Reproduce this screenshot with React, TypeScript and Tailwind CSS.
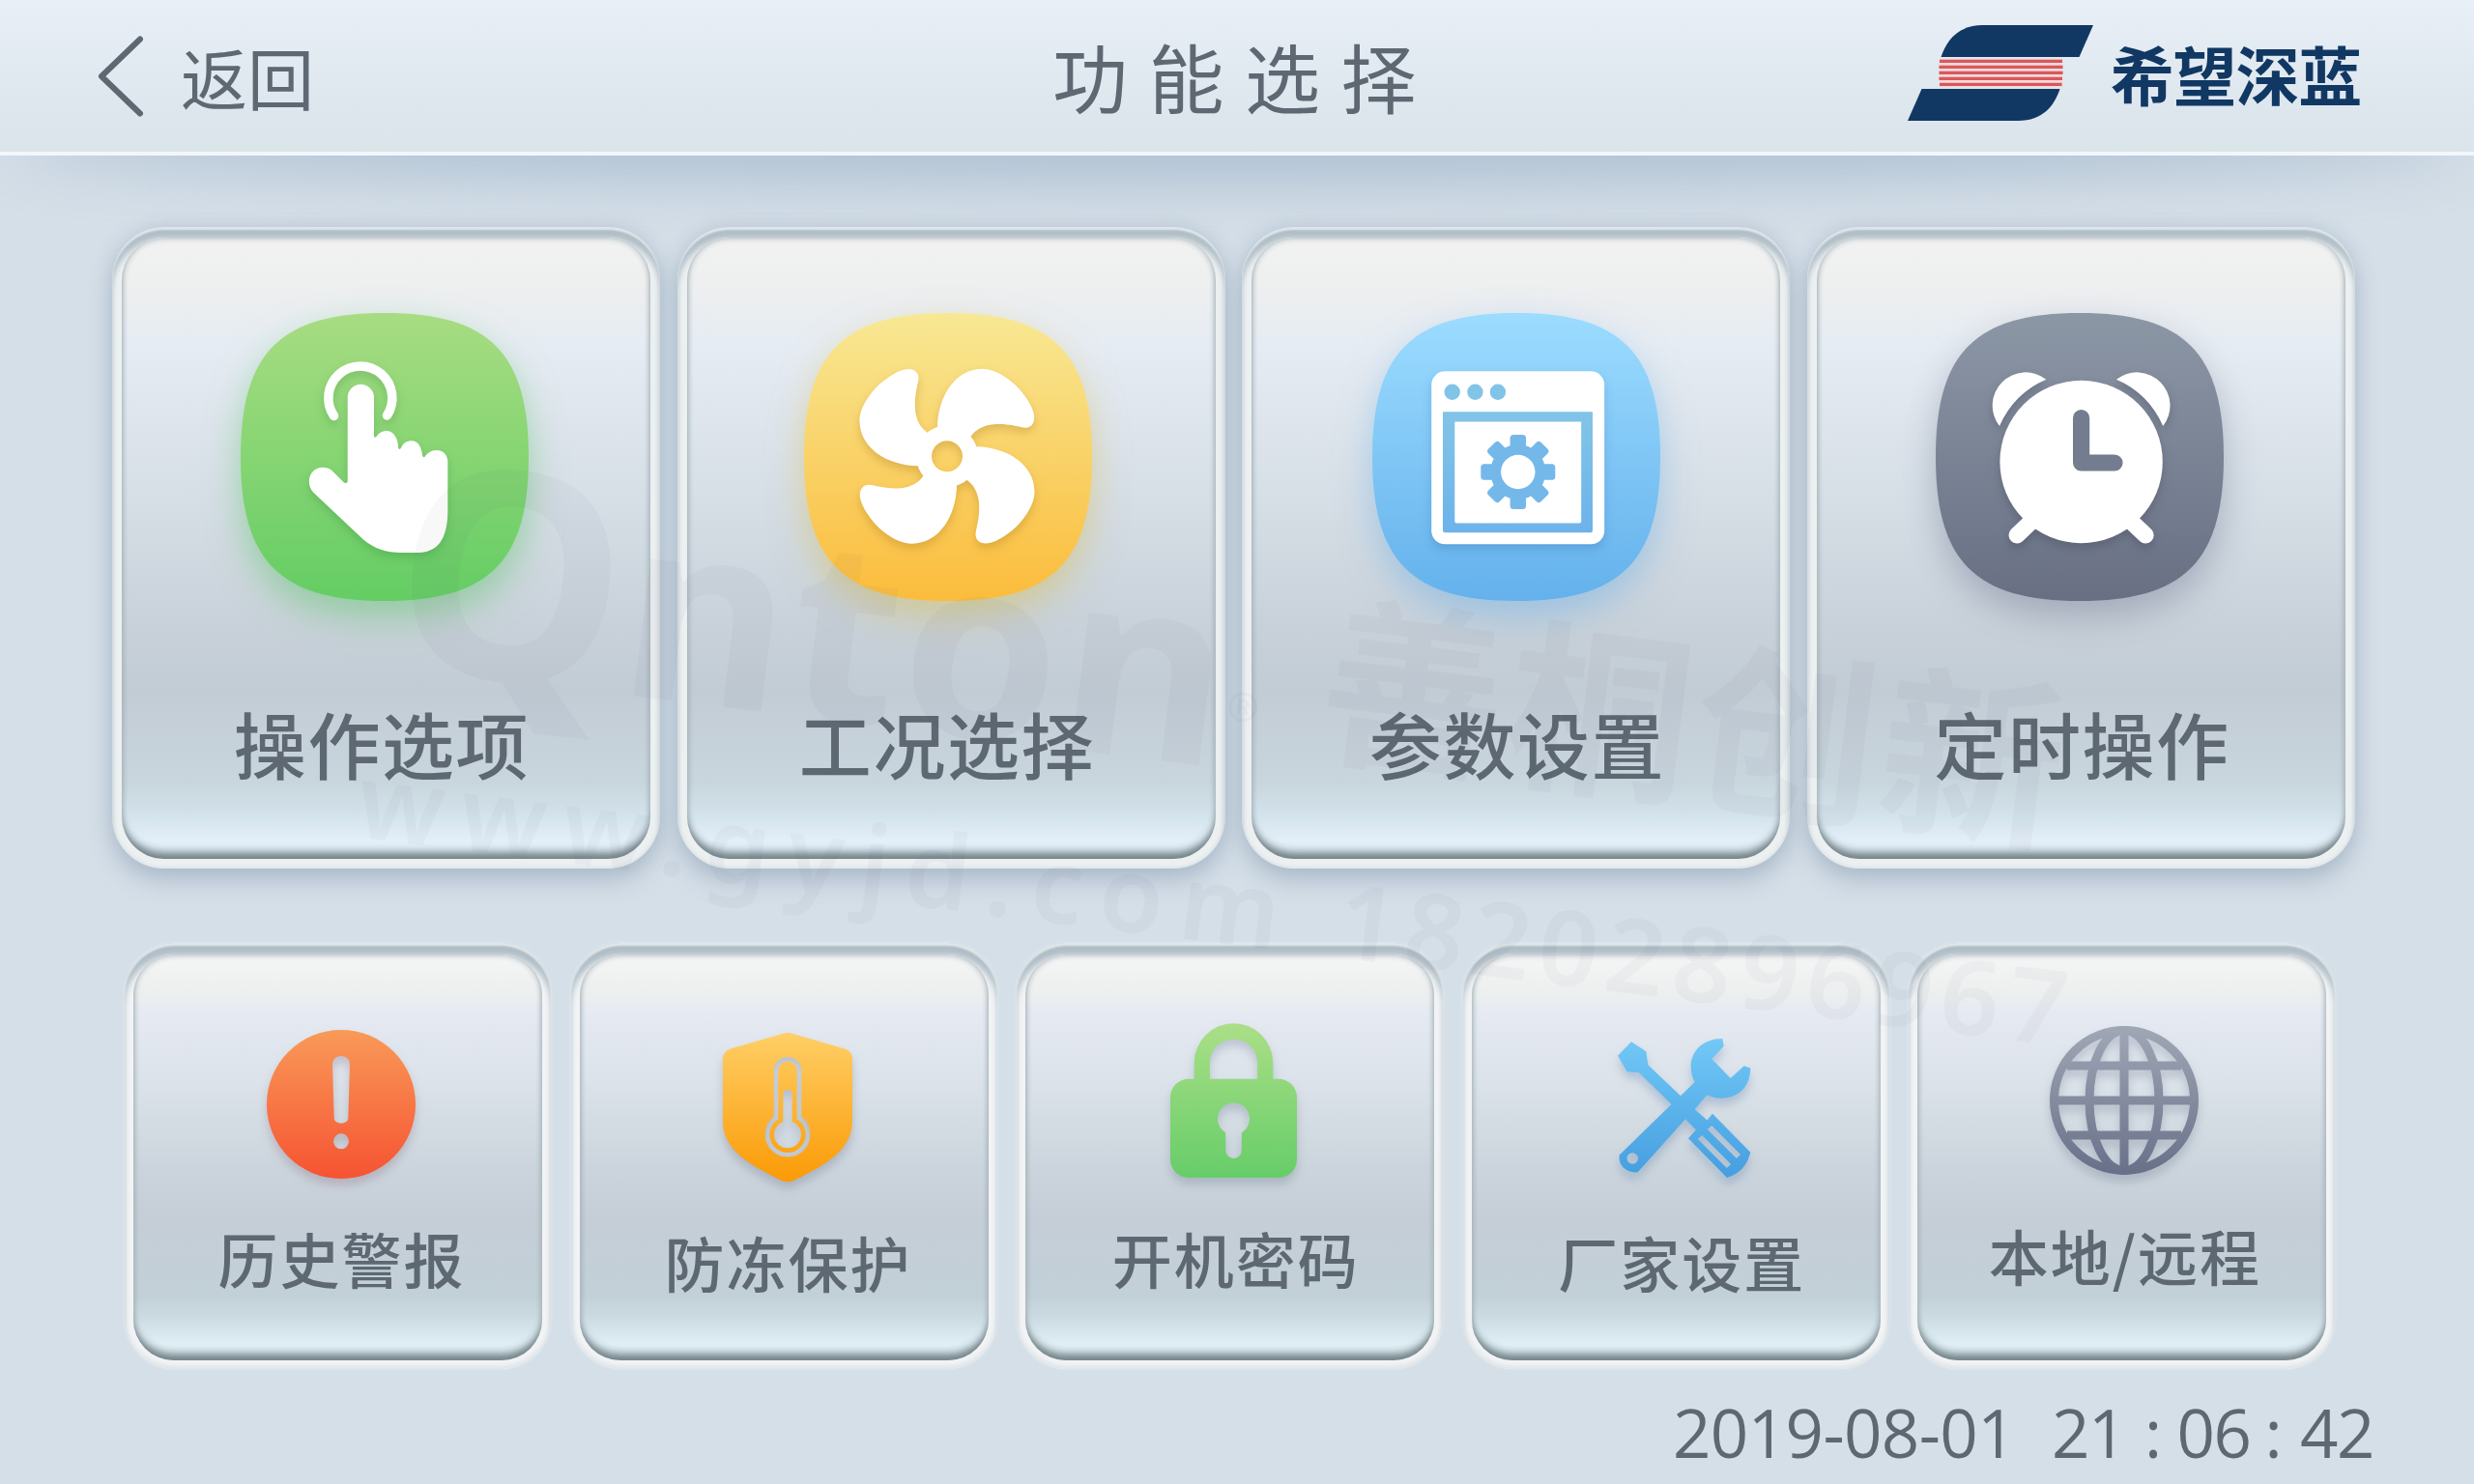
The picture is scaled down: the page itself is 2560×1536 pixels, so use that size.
import type { ReactNode } from 'react';

const SQUIRCLE =
  'M0 149C0 41 41 0 149 0C257 0 298 41 298 149C298 257 257 298 149 298C41 298 0 257 0 149Z';

const BLADE =
  'M-10 -31C-9 -62 8 -90 36 -90.5C52 -91 70 -76 77 -67C84 -58 88 -51 89.5 -45C92 -36 88 -29 80 -29.5C71 -31 62 -34 48 -33C38 -32 30 -28 25 -21L0 0Z';

function Gradient({ id, from, to }: { id: string; from: string; to: string }) {
  return (
    <defs>
      <linearGradient id={id} x1="0" y1="0" x2="0" y2="1">
        <stop offset="0" stopColor={from} />
        <stop offset="1" stopColor={to} />
      </linearGradient>
    </defs>
  );
}

function TouchIcon() {
  return (
    <svg viewBox="0 0 298 298" className="size-[298px] overflow-visible drop-shadow-[0_16px_18px_rgba(90,195,100,0.5)]">
      <Gradient id="touch" from="#a8dc82" to="#64cd64" />
      <path d={SQUIRCLE} fill="url(#touch)" />
      <g className="drop-shadow-[0_5px_5px_rgba(40,120,50,0.25)]">
        <path d="M96.5 106.5A33 33 0 1 1 151.5 106" fill="none" stroke="#fff" strokeWidth="9.6" strokeLinecap="round" />
        <path
          d="M110.7 174V86.4A13.7 13.7 0 0 1 138 86.4V126C138 129.5 139.5 129.5 141.5 126.5C144 123.5 147 122 151 122C158 122 163 129 163.3 140C164 141.5 165.5 141 166.5 138.5C168.5 134.5 172 132.3 177 132.3C184 132.3 187 139 188.3 148C189 150 190.5 149.5 191.5 147.5C194 144 198 142 203 142C210 142 214.3 147 214.3 154V204C214.3 228 208 247.5 184 248H166C151 248 138 244 127 234.5L75 185.5C70 180 69.5 171 73.5 165.5C78 159 88 158 94.5 163L106 174.5C108.5 177 110.7 176 110.7 174Z"
          fill="#fff"
        />
      </g>
    </svg>
  );
}

function FanIcon() {
  return (
    <svg viewBox="0 0 298 298" className="size-[298px] overflow-visible drop-shadow-[0_16px_18px_rgba(215,190,80,0.5)]">
      <Gradient id="fan" from="#f8e894" to="#fbbc3c" />
      <mask id="hub">
        <rect width="298" height="298" fill="#fff" />
        <circle cx="148" cy="148.3" r="16" fill="#000" />
      </mask>
      <path d={SQUIRCLE} fill="url(#fan)" />
      <g className="drop-shadow-[0_5px_5px_rgba(160,110,20,0.3)]">
        <g fill="#fff" mask="url(#hub)">
          <circle cx="148" cy="148.3" r="32" />
          {[0, 90, 180, 270].map((deg) => (
            <path key={deg} d={BLADE} transform={`translate(148 148.3) rotate(${deg})`} />
          ))}
        </g>
      </g>
    </svg>
  );
}

function ParamsIcon() {
  return (
    <svg viewBox="0 0 298 298" className="size-[298px] overflow-visible drop-shadow-[0_16px_18px_rgba(110,175,230,0.5)]">
      <Gradient id="params" from="#9cdcff" to="#64b1ec" />
      <Gradient id="paramsInner" from="#82c4e8" to="#6db3ea" />
      <path d={SQUIRCLE} fill="url(#params)" />
      <rect x="61.2" y="60.3" width="179" height="179" rx="14" fill="#fff" className="drop-shadow-[0_5px_5px_rgba(30,90,160,0.25)]" />
      <g fill="#82c4e8">
        <circle cx="82.7" cy="81.7" r="8.2" />
        <circle cx="106.4" cy="81.7" r="8.2" />
        <circle cx="129.9" cy="81.7" r="8.2" />
      </g>
      <path
        fillRule="evenodd"
        fill="url(#paramsInner)"
        d="M73 102.2H228V225Q228 227.2 226 227.2H75Q73 227.2 73 225ZM85.3 112.5V215.4Q85.3 217.4 87.3 217.4H214.2Q216.2 217.4 216.2 215.4V112.5Z"
      />
      <g transform="translate(150.8 164.5)" fill="#74b8ea">
        {[0, 45, 90, 135].map((deg) => (
          <rect key={deg} x="-8.2" y="-38.5" width="16.4" height="77" rx="3.5" transform={`rotate(${deg})`} />
        ))}
        <circle r="28.5" />
        <circle r="17.7" fill="#fff" />
      </g>
    </svg>
  );
}

function AlarmIcon() {
  return (
    <svg viewBox="0 0 298 298" className="size-[298px] overflow-visible drop-shadow-[0_16px_18px_rgba(110,120,145,0.45)]">
      <Gradient id="alarm" from="#8c97a6" to="#686f83" />
      <path d={SQUIRCLE} fill="url(#alarm)" />
      <g fill="#fff" className="drop-shadow-[0_5px_5px_rgba(40,45,65,0.25)]">
        <circle cx="150.6" cy="154" r="84.2" />
        <path d="M114.3 68.7A34.4 34.4 0 0 0 66 117A93 93 0 0 1 114.3 68.7Z" />
        <path d="M186.9 68.7A34.4 34.4 0 0 1 235.2 117A93 93 0 0 0 186.9 68.7Z" />
        <path d="M84 230L106 209M217.2 230L195 209" stroke="#fff" strokeWidth="17" strokeLinecap="round" />
      </g>
      <path d="M150.6 108.5V155H185" fill="none" stroke="#747c8f" strokeWidth="17.2" strokeLinecap="round" strokeLinejoin="round" />
    </svg>
  );
}

function AlertIcon() {
  return (
    <svg viewBox="0 0 154 154" className="size-[154px] overflow-visible drop-shadow-[0_7px_5px_rgba(120,80,100,0.25)]">
      <Gradient id="alert" from="#f99a58" to="#f65332" />
      <path
        fillRule="evenodd"
        fill="url(#alert)"
        d="M77 0a77 77 0 1 0 0 154a77 77 0 0 0 0-154zM68 36C68 24 86 24 86 36L84.3 91C84.3 98.5 69.7 98.5 69.7 91ZM77 107.3a8 8 0 1 1 0 16a8 8 0 0 1 0-16z"
      />
    </svg>
  );
}

function FrostIcon() {
  return (
    <svg viewBox="0 0 134 155" className="h-[155px] w-[134px] overflow-visible drop-shadow-[0_7px_5px_rgba(90,100,125,0.28)]">
      <Gradient id="frost" from="#ffcf66" to="#fb9a06" />
      <mask id="thermo">
        <rect width="134" height="155" fill="#fff" />
        <path d="M55 88V39.2A12 12 0 0 1 79 39.2V88A21 21 0 1 1 55 88Z" fill="none" stroke="#000" strokeWidth="4.6" />
        <circle cx="67" cy="105.3" r="14" fill="#000" />
        <path d="M67 63.5V100" stroke="#000" strokeWidth="9.4" strokeLinecap="round" />
      </mask>
      <path
        d="M61.5 1Q67 -1 72.5 1L126 16.5Q134 19.5 134 27V92C134 122 104 138 73 153Q67 155.5 61 153C30 138 0 122 0 92V27Q0 19.5 8 16.5Z"
        fill="url(#frost)"
        mask="url(#thermo)"
      />
    </svg>
  );
}

function LockIcon() {
  return (
    <svg viewBox="0 0 131 160" className="h-[160px] w-[131px] overflow-visible drop-shadow-[0_7px_5px_rgba(90,110,125,0.28)]">
      <Gradient id="lock" from="#abdf87" to="#66cd68" />
      <path
        fillRule="evenodd"
        fill="url(#lock)"
        d="M24.7 57.7V41A40.8 40.8 0 0 1 106.3 41V57.7H112A19 19 0 0 1 131 76.7V141A19 19 0 0 1 112 160H19A19 19 0 0 1 0 141V76.7A19 19 0 0 1 19 57.7ZM40.9 57.7H90.1V41A24.6 24.6 0 0 0 40.9 41ZM57.2 113.4A16.6 16.6 0 1 1 73.8 113.4V131.7A8.3 8.3 0 0 1 57.2 131.7Z"
      />
    </svg>
  );
}

function ToolsIcon() {
  return (
    <svg viewBox="0 0 138 144" className="h-[144px] w-[138px] overflow-visible drop-shadow-[0_7px_5px_rgba(70,110,160,0.28)]">
      <Gradient id="tools" from="#72c8f6" to="#459ee0" />
      <mask id="slits">
        <rect x="-2" y="-2" width="142" height="148" fill="#fff" />
        <circle cx="15.3" cy="124" r="5.8" fill="#000" />
        <path d="M95 92L125 122M85 102L115 132" stroke="#000" strokeWidth="6" />
      </mask>
      {/* screwdriver and wrench share one path so the gradient runs across both */}
      <path
        mask="url(#slits)"
        fill="url(#tools)"
        d="M14 3.3L29.3 13.3L31.3 27.3L65 59.3L79.7 45C77 40 75.7 35 75.7 28.3C76 12 89 0 108.3 0L109.7 7.7L97.3 21L116.7 41L130.7 28.3L137.3 30.5C137 49 126 61.5 107 61.7C101 61.7 97 60.5 92.3 58.3L79.7 73.3L92.5 84.5L98 77.7L137.3 117.7C134 131 126 140 113 144L73 103.3L81 94.5L70 83.3L20.7 138.3C9 139.5 0 131 1.7 120.5L55.5 68L21.7 35L9.7 34.3L0 17.7Z"
      />
    </svg>
  );
}

function GlobeIcon() {
  return (
    <svg viewBox="0 0 154 154" className="size-[154px] overflow-visible drop-shadow-[0_7px_5px_rgba(90,100,125,0.28)]">
      <defs>
        <linearGradient id="globe" gradientUnits="userSpaceOnUse" x1="0" y1="0" x2="0" y2="154">
          <stop offset="0" stopColor="#a0a7b5" />
          <stop offset="1" stopColor="#687089" />
        </linearGradient>
      </defs>
      <g fill="none" stroke="url(#globe)" strokeWidth="9">
        <circle cx="77" cy="77" r="72.5" />
        <ellipse cx="77" cy="77" rx="36" ry="72.5" />
        <path d="M77 4V150M18 41H136M5 77H149M18 113H136" />
      </g>
    </svg>
  );
}

const mainItems: { label: string; icon: ReactNode; iconOffset: string; labelOffset: string }[] = [
  { label: '操作选项', icon: <TouchIcon />, iconOffset: '-ml-[3px]', labelOffset: '-ml-[9px]' },
  { label: '工况选择', icon: <FanIcon />, iconOffset: '-ml-[6px]', labelOffset: '-ml-[8px]' },
  { label: '参数设置', icon: <ParamsIcon />, iconOffset: 'ml-0', labelOffset: 'ml-[3px]' },
  { label: '定时操作', icon: <AlarmIcon />, iconOffset: '-ml-[3px]', labelOffset: 'ml-[3px]' },
];

const subItems: { label: string; icon: ReactNode; iconBox: string; labelBox: string }[] = [
  { label: '历史警报', icon: <AlertIcon />, iconBox: 'pt-[78px] pl-[7px]', labelBox: 'pt-[34px] pl-[8px]' },
  { label: '防冻保护', icon: <FrostIcon />, iconBox: 'pt-[81px] pl-[8px]', labelBox: 'pt-[38px] pl-[9px]' },
  { label: '开机密码', icon: <LockIcon />, iconBox: 'pt-[71px] pl-[8px]', labelBox: 'pt-[34px] pl-[12px]' },
  { label: '厂家设置', icon: <ToolsIcon />, iconBox: 'pt-[87px] pl-[18px]', labelBox: 'pt-[38px] pl-[12px]' },
  { label: '本地/远程', icon: <GlobeIcon />, iconBox: 'pt-[74px] pl-[4px]', labelBox: 'pt-[31px] pl-[6px]' },
];

function Logo() {
  return (
    <div className="flex items-center">
      <svg viewBox="0 0 192 99" className="h-[99px] w-[192px]">
        <path d="M34.5 33C40 16 52 0 78 0H192L177.5 33Z" fill="#113863" />
        <rect x="32.5" y="34.5" width="128" height="30" fill="#f3d9dc" />
        <path d="M33 37.3H160M32.5 43.3H160.5M32.5 49.3H160.5M32.5 55.3H160M33 61.3H159.5" stroke="#d95759" strokeWidth="3.2" />
        <path d="M14.5 66H157.5C152 83 140 99 114 99H0Z" fill="#113863" />
      </svg>
      <span className="ml-[18px] text-[66px] leading-[90px] font-bold tracking-[-1.2px] text-[#113863]">希望深蓝</span>
    </div>
  );
}

function Header() {
  return (
    <header className="relative z-10 grid h-[161px] grid-cols-3 items-center border-b-[4px] border-[#f3f6fb] bg-linear-to-b from-[#e8eff7] from-0% via-[#dfe7ef] via-60% to-[#dae5ea]">
      <button className="flex items-center pl-[101px] text-[#5d6872]">
        <svg viewBox="0 0 48 84" className="h-[84px] w-[48px]" fill="none" stroke="currentColor" strokeWidth="6" strokeLinecap="round" strokeLinejoin="round">
          <path d="M44 3.5L4 42L44 80.5" />
        </svg>
        <span className="pl-[38px] text-[69px] leading-[90px]">返回</span>
      </button>
      <h1 className="pl-[16px] pb-[2px] text-center text-[78px] leading-[110px] tracking-[21.5px] text-[#5d6872]">功能选择</h1>
      <div className="flex justify-end pr-[117px] pb-[7px]">
        <Logo />
      </div>
    </header>
  );
}

function MainCard({ label, icon, iconOffset, labelOffset }: { label: string; icon: ReactNode; iconOffset: string; labelOffset: string }) {
  return (
    <div className="h-[664px] w-[567px] rounded-[54px] bg-[#ecf0f1] px-[10px] pt-[11px] pb-[10px] shadow-[inset_0_3px_2px_#dfe7ec,inset_0_13px_6px_-1px_#afbdc6,inset_0_0_5px_#cfd8de,0_14px_24px_rgba(140,160,180,0.45),0_0_18px_rgba(150,170,190,0.35)]">
      <div className="flex h-full flex-col items-center rounded-[44px] bg-[linear-gradient(#f2f2f2_0%,#eeefef_7%,#e6ecf3_17%,#d6dee6_42%,#c8d1d9_63%,#c2ccd5_73%,#c9d6de_88%,#d3e3eb_93%,#e3eff8_97%,#e3eff8_100%)] pt-[78px] shadow-[inset_0_-12px_8px_-5px_#76858a,inset_0_0_6px_#8a9ba3,inset_0_3px_3px_#fafafa]">
        <div className={iconOffset}>{icon}</div>
        <span className={`mt-[97px] text-[75px] leading-[100px] font-medium tracking-[1.6px] text-[#5d6872] ${labelOffset}`}>{label}</span>
      </div>
    </div>
  );
}

function SubCard({ label, icon, iconBox, labelBox }: { label: string; icon: ReactNode; iconBox: string; labelBox: string }) {
  return (
    <div className="h-[441px] w-[441px] rounded-[52px] bg-[#f1f3f5] px-[9px] pt-[12px] pb-[9px] shadow-[inset_0_3px_2px_#e0e8ec,inset_0_14px_6px_-1px_#afbdc6,inset_0_-3px_4px_#dfe4e6,0_0_3px_#e6edf1]">
      <div className="flex h-full flex-col items-center rounded-[42px] bg-[linear-gradient(#f5f5f5_0%,#ecefef_10%,#e6eaf2_14%,#dbe2e9_32%,#ccd5dd_52%,#c5ced7_66%,#c2d0d7_84%,#cbdae1_89%,#dfeff5_96%,#dfeff5_100%)] shadow-[inset_0_-12px_8px_-5px_#76858a,inset_0_0_6px_#8a9ba3,inset_0_3px_3px_#fafafa]">
        <div className={`h-[240px] ${iconBox}`}>{icon}</div>
        <span className={`text-[62px] leading-[80px] font-medium tracking-[2px] whitespace-nowrap text-[#5d6872] ${labelBox}`}>{label}</span>
      </div>
    </div>
  );
}

function Watermark() {
  return (
    <div className="pointer-events-none absolute top-[380px] left-[436px] z-20 origin-top-left rotate-[7deg] whitespace-nowrap text-[#50585c]/[0.04] select-none">
      <div className="flex h-[390px] items-center font-bold">
        <span className="font-['Noto_Sans'] text-[262px] leading-none tracking-[3px]">
          <span className="text-[300px]">Q</span>nton
        </span>
        <span className="mt-[120px] text-[70px] font-normal">®</span>
        <span className="ml-[62px] text-[190px] tracking-[4px]">善桐创新</span>
      </div>
      <div className="-ml-[10px] flex gap-[44px] font-['Noto_Sans'] text-[108px] leading-[120px] font-semibold">
        <span className="tracking-[17px]">www.gyjd.com</span>
        <span className="tracking-[8px]">18202896967</span>
      </div>
    </div>
  );
}

export default function App() {
  return (
    <div className="relative flex h-[1536px] w-[2560px] flex-col overflow-hidden bg-[#d5dfe8] font-['Noto_Sans_CJK_SC',sans-serif]">
      <Header />
      <div className="mx-[20px] -mt-[60px] h-[60px] rounded-[50%] shadow-[0_16px_60px_12px_rgba(160,182,203,0.75)]" />
      <main className="relative">
        <div className="flex gap-[17.5px] pt-[74px] pl-[116px]">
          {mainItems.map((item) => (
            <MainCard key={item.label} {...item} />
          ))}
        </div>
        <div className="flex gap-[20.6px] pt-[77px] pl-[129px]">
          {subItems.map((item) => (
            <SubCard key={item.label} {...item} />
          ))}
        </div>
      </main>
      <footer className="flex justify-end pt-[17px] pr-[104px] font-['Open_Sans',sans-serif] text-[69px] leading-[96px] tracking-[-1.5px] text-[#5d6872]">
        <span className="tracking-[-0.6px]">2019-08-01</span>
        <span className="pl-[38px]">21</span>
        <span className="pr-[17px] pl-[20px]">:</span>
        <span>06</span>
        <span className="pr-[20px] pl-[15px]">:</span>
        <span>42</span>
      </footer>
      <Watermark />
    </div>
  );
}
